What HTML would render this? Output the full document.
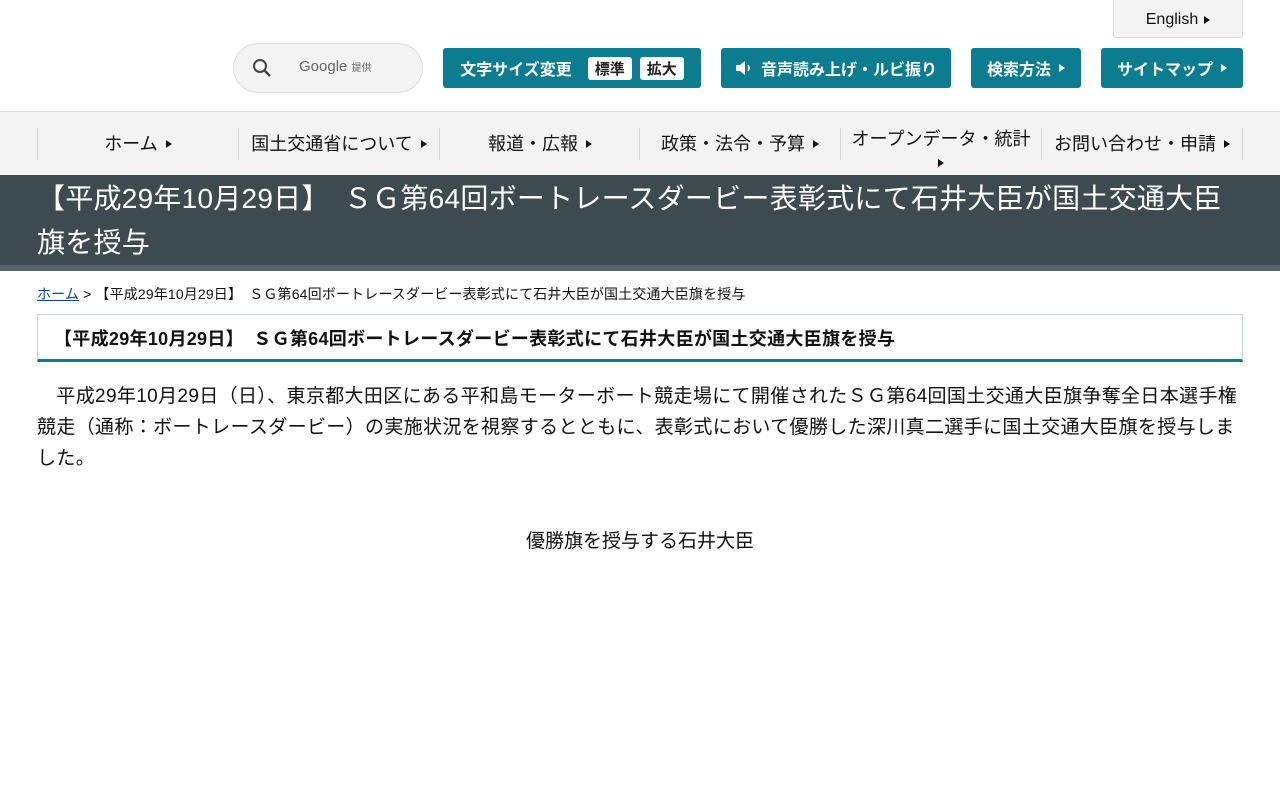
<!DOCTYPE html>
<html><head><meta charset="utf-8"><style>
body{margin:0;width:1280px;height:800px;background:#fff;font-family:"Liberation Sans","Noto Sans CJK JP",sans-serif;color:#222;position:relative;overflow:hidden}
.abs{position:absolute}
.btn{position:absolute;top:48px;height:40px;background:#0c7d91;color:#fff;border-radius:3px;font-weight:bold;font-size:16px;display:flex;align-items:center;justify-content:center;box-sizing:border-box}
.tri{display:inline-block;width:0;height:0;border-left:6px solid currentColor;border-top:4.5px solid transparent;border-bottom:4.5px solid transparent;margin-left:8px}
.wb{background:#fff;color:#222;border-radius:3px;padding:1px 7px;font-size:15px;margin-left:8px}
.nav{position:absolute;top:111px;left:0;width:1280px;height:64px;background:#f3f3f3;border-top:1px solid #ddd;box-sizing:border-box}
.ni{position:absolute;top:16px;height:32px;border-left:1px solid #d6d6d6;display:flex;align-items:center;justify-content:center;font-size:18px;color:#111;text-align:center;line-height:1.25}
</style></head><body>
<div class="abs" style="left:1113px;top:0;width:130px;height:38px;background:#f3f3f3;border:1px solid #ddd;border-top:none;border-radius:0 0 3px 3px;box-sizing:border-box;display:flex;align-items:center;justify-content:center;font-size:16px;color:#111;padding-top:2px">English<span class="tri" style="margin-left:6px"></span></div>
<div class="abs" style="left:233px;top:43px;width:190px;height:50px;border:1px solid #ddd;border-radius:25px;background:#f3f3f3;box-sizing:border-box">
<svg class="abs" style="left:18px;top:14px" width="20" height="20" viewBox="0 0 20 20"><circle cx="8" cy="8" r="6" fill="none" stroke="#444" stroke-width="2"/><line x1="12.5" y1="12.5" x2="18" y2="18" stroke="#444" stroke-width="2.4"/></svg>
<span class="abs" style="left:65px;top:14px;font-size:15px;color:#666">Google <span style="font-size:10px">提供</span></span></div>
<div class="btn" style="left:443px;width:258px">文字サイズ変更<span class="wb" style="margin-left:16px">標準</span><span class="wb">拡大</span></div>
<div class="btn" style="left:721px;width:230px"><svg width="18" height="16" viewBox="0 0 18 16" style="margin-right:8px"><path d="M1 5h4l5-4v14l-5-4H1z" fill="#fff"/><path d="M13 5q2 3 0 6" stroke="#fff" stroke-width="1.5" fill="none"/></svg>音声読み上げ・ルビ振り</div>
<div class="btn" style="left:971px;width:110px">検索方法<span class="tri"></span></div>
<div class="btn" style="left:1101px;width:142px">サイトマップ<span class="tri"></span></div>
<div class="nav">
<div class="ni" style="left:37px;width:200px">ホーム<span class="tri"></span></div>
<div class="ni" style="left:238px;width:200px">国土交通省について<span class="tri"></span></div>
<div class="ni" style="left:439px;width:200px">報道・広報<span class="tri"></span></div>
<div class="ni" style="left:639px;width:200px">政策・法令・予算<span class="tri"></span></div>
<div class="ni" style="left:840px;width:200px;display:block;padding-top:0;line-height:22px">オープンデータ・統計<br><span class="tri" style="margin:0"></span></div>
<div class="ni" style="left:1041px;width:200px;border-right:1px solid #d6d6d6">お問い合わせ・申請<span class="tri"></span></div>
</div>
<div class="abs" style="left:0;top:175px;width:1280px;height:90px;background:#3d4a4f"></div>
<div class="abs" style="left:0;top:265px;width:1280px;height:6px;background:#56656b"></div>
<div class="abs" style="left:37px;top:177px;width:1220px;font-size:28px;letter-spacing:0.25px;line-height:44px;color:#fff;white-space:nowrap">【平成29年10月29日】　ＳＧ第64回ボートレースダービー表彰式にて石井大臣が国土交通大臣<br>旗を授与</div>
<div class="abs" style="left:37px;top:284px;font-size:14px;letter-spacing:0.15px;color:#111"><span style="color:#0645ad;text-decoration:underline">ホーム</span> &gt; 【平成29年10月29日】　ＳＧ第64回ボートレースダービー表彰式にて石井大臣が国土交通大臣旗を授与</div>
<div class="abs" style="left:37px;top:314px;width:1206px;height:48px;border:1px solid #c8d6dc;border-bottom:3px solid #0c7d91;box-sizing:border-box;padding-left:16px;font-size:18px;letter-spacing:0.3px;font-weight:bold;line-height:48px;color:#111">【平成29年10月29日】　ＳＧ第64回ボートレースダービー表彰式にて石井大臣が国土交通大臣旗を授与</div>
<div class="abs" style="left:37px;top:381px;width:1230px;font-size:19px;letter-spacing:0.35px;line-height:31px;color:#111;white-space:nowrap">　平成29年10月29日（日）、東京都大田区にある平和島モーターボート競走場にて開催されたＳＧ第64回国土交通大臣旗争奪全日本選手権<br>競走（通称：ボートレースダービー）の実施状況を視察するとともに、表彰式において優勝した深川真二選手に国土交通大臣旗を授与しま<br>した。</div>
<div class="abs" style="left:0;top:526px;width:1280px;text-align:center;font-size:19px;color:#111">優勝旗を授与する石井大臣</div>
</body></html>
